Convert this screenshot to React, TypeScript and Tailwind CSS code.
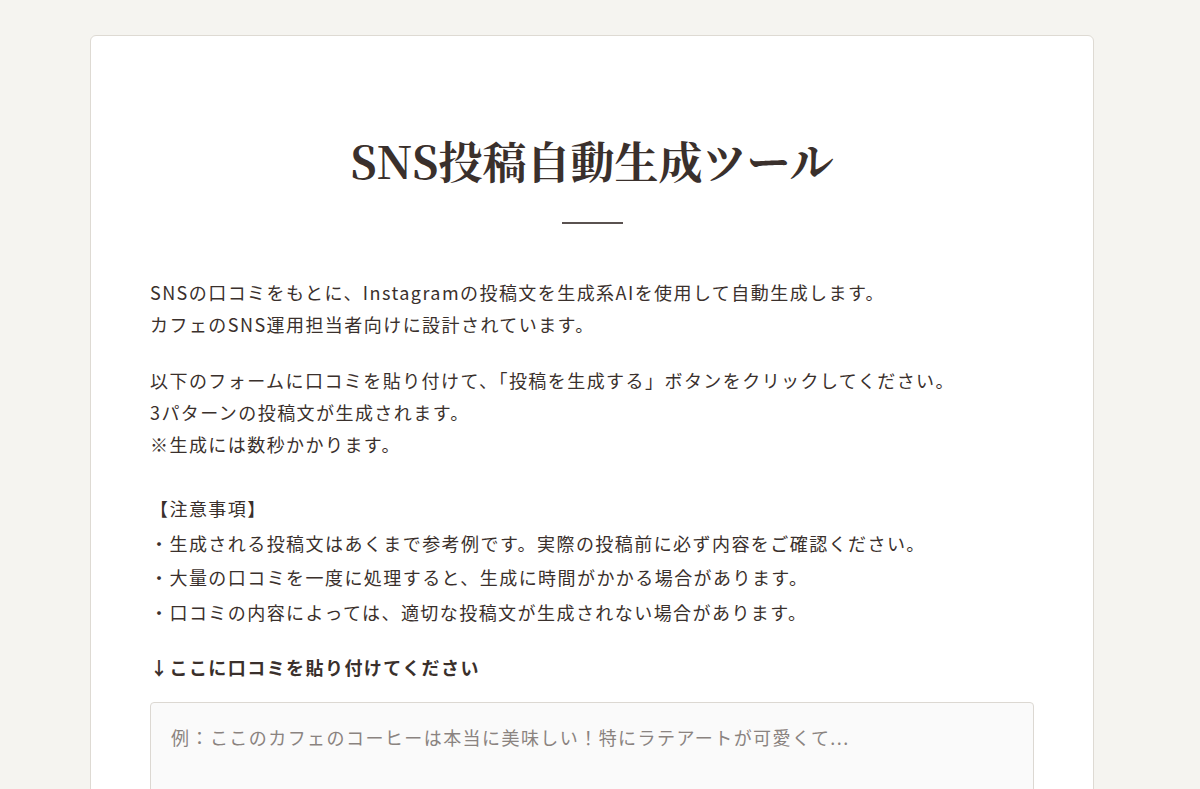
export default function App() {
  return (
    <div className="min-h-[789px] bg-[#f5f4f0] pl-[90px] pt-[35px] font-['Noto_Sans_CJK_JP','Noto_Sans',sans-serif] text-[#3a302c]">
      <div className="w-[1004px] rounded-md border border-[#dedad3] bg-white px-[59px] pt-[91px] pb-16">
        <h1 className="text-center font-['Noto_Serif_CJK_JP','Liberation_Serif','Noto_Sans_CJK_JP',serif] text-[44px] font-bold leading-[1.5] text-[#3a302c]">
          SNS投稿自動生成ツール
        </h1>
        <div className="mx-auto mt-[29px] h-[2px] w-[61px] bg-[#5a5250]" />

        <div className="mt-[52px] text-[18px] leading-[32px] tracking-[0.08em]">
          <p>
            SNSの口コミをもとに、Instagramの投稿文を生成系AIを使用して自動生成します。
            <br />
            カフェのSNS運用担当者向けに設計されています。
          </p>
          <p className="mt-6">
            以下のフォームに口コミを貼り付けて、「投稿を生成する」ボタンをクリックしてください。
            <br />
            3パターンの投稿文が生成されます。
            <br />
            ※生成には数秒かかります。
          </p>
          <div className="mt-[31px] leading-[34.5px]">
            <p>【注意事項】</p>
            <p>・生成される投稿文はあくまで参考例です。実際の投稿前に必ず内容をご確認ください。</p>
            <p>・大量の口コミを一度に処理すると、生成に時間がかかる場合があります。</p>
            <p>・口コミの内容によっては、適切な投稿文が生成されない場合があります。</p>
          </div>
        </div>

        <label className="mt-[22px] block text-[18px] font-bold leading-[32px] tracking-[0.08em]">
          ↓ここに口コミを貼り付けてください
        </label>
        <textarea
          className="mt-[19px] block h-[200px] w-full resize-none rounded border border-[#dcd8d2] bg-[#fafafa] px-5 pt-5 pb-5 text-[18px] leading-[1.6] tracking-[0.08em] text-[#3a302c] outline-none placeholder:text-[#8a8380]"
          placeholder="例：ここのカフェのコーヒーは本当に美味しい！特にラテアートが可愛くて..."
        />
      </div>
    </div>
  );
}
